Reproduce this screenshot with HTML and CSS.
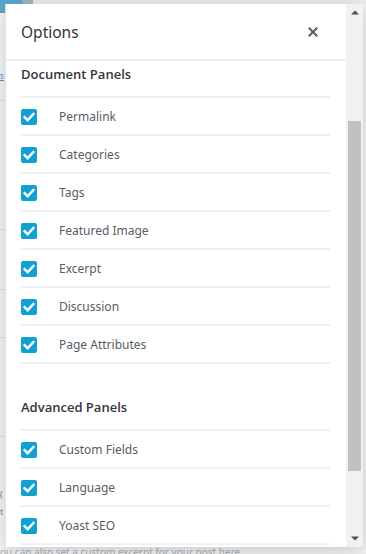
FILE: index.html
```html
<!DOCTYPE html>
<html lang="en">
<head>
<meta charset="utf-8">
<title>Options</title>
<link rel="stylesheet" href="styles.css">
</head>
<body>
<div class="page">
  <div class="topbar">
    <div class="blue-btn"><span class="btn-dark"></span></div>
  </div>
  <div class="side">
    <span class="link-frag">s</span>
    <span class="rule r1"></span>
    <span class="rule r2"></span>
    <span class="rule r3"></span>
    <span class="rule r4"></span>
    <span class="frag purple">(</span>
    <span class="frag teal">t</span>
    <span class="rule r5"></span>
  </div>
  <div class="bottom-text">ou can also set a custom excerpt for your post here.</div>
</div>

<div class="modal">
  <div class="modal-main">
    <div class="modal-header">
      <h1 class="modal-title">Options</h1>
      <button class="close-btn" aria-label="Close dialog">
        <svg viewBox="0 0 20 20" width="20" height="20"><path d="M14.95 6.46L11.41 10l3.54 3.54-1.41 1.41L10 11.42l-3.53 3.53-1.42-1.42L8.58 10 5.05 6.47l1.42-1.42L10 8.58l3.54-3.53z"/></svg>
      </button>
    </div>
    <div class="modal-content">
      <section class="section">
        <h2 class="section-title">Document Panels</h2>
        <ul class="options">
          <li class="option"><span class="cb"><svg viewBox="0 0 16 16"><path d="M3.6 8.2l3 3 5.8-6.2"/></svg></span><span class="label">Permalink</span></li>
          <li class="option"><span class="cb"><svg viewBox="0 0 16 16"><path d="M3.6 8.2l3 3 5.8-6.2"/></svg></span><span class="label">Categories</span></li>
          <li class="option"><span class="cb"><svg viewBox="0 0 16 16"><path d="M3.6 8.2l3 3 5.8-6.2"/></svg></span><span class="label">Tags</span></li>
          <li class="option"><span class="cb"><svg viewBox="0 0 16 16"><path d="M3.6 8.2l3 3 5.8-6.2"/></svg></span><span class="label">Featured Image</span></li>
          <li class="option"><span class="cb"><svg viewBox="0 0 16 16"><path d="M3.6 8.2l3 3 5.8-6.2"/></svg></span><span class="label">Excerpt</span></li>
          <li class="option"><span class="cb"><svg viewBox="0 0 16 16"><path d="M3.6 8.2l3 3 5.8-6.2"/></svg></span><span class="label">Discussion</span></li>
          <li class="option"><span class="cb"><svg viewBox="0 0 16 16"><path d="M3.6 8.2l3 3 5.8-6.2"/></svg></span><span class="label">Page Attributes</span></li>
        </ul>
      </section>
      <section class="section">
        <h2 class="section-title">Advanced Panels</h2>
        <ul class="options">
          <li class="option"><span class="cb"><svg viewBox="0 0 16 16"><path d="M3.6 8.2l3 3 5.8-6.2"/></svg></span><span class="label">Custom Fields</span></li>
          <li class="option"><span class="cb"><svg viewBox="0 0 16 16"><path d="M3.6 8.2l3 3 5.8-6.2"/></svg></span><span class="label">Language</span></li>
          <li class="option"><span class="cb"><svg viewBox="0 0 16 16"><path d="M3.6 8.2l3 3 5.8-6.2"/></svg></span><span class="label">Yoast SEO</span></li>
        </ul>
      </section>
    </div>
  </div>
  <div class="scrollbar">
    <div class="sb-btn"><svg viewBox="0 0 8 5" width="8" height="5"><polygon points="0,4.5 4,0.5 8,4.5"/></svg></div>
    <div class="sb-track"><div class="sb-thumb"></div></div>
    <div class="sb-btn"><svg viewBox="0 0 8 5" width="8" height="5"><polygon points="0,0.5 8,0.5 4,4.5"/></svg></div>
  </div>
</div>
</body>
</html>
```

FILE: styles.css
```css
* { box-sizing: border-box; }
html, body { margin: 0; padding: 0; }
body {
  width: 366px;
  height: 554px;
  overflow: hidden;
  position: relative;
  background: #f3f4f5;
  font-family: "Noto Sans", "Open Sans", sans-serif;
}

/* background page fragments */
.page { position: relative; height: 554px; }
.topbar { height: 4px; background: #eeeff0; }
.blue-btn {
  position: absolute; left: 0; top: 0;
  width: 33px; height: 13px;
  background: #5aa9cf;
}
.btn-dark {
  position: absolute; left: 22px; top: 0;
  width: 11px; height: 4px; background: #9fb6c2;
}
.side {
  position: absolute; left: 0; top: 13px; width: 5px; height: 534px;
  background: #f8f9f9;
}
.link-frag {
  position: absolute; left: 0; top: 58px;
  font-size: 8px; line-height: 10px; color: #4f94d4; text-decoration: underline;
}
.rule { position: absolute; left: 0; width: 5px; height: 1px; background: #e2e4e7; }
.r1 { top: 87px; }
.r2 { top: 216px; }
.r3 { top: 276px; }
.r4 { top: 324px; }
.r5 { top: 423px; }
.frag { position: absolute; left: 0; font-size: 9px; line-height: 11px; }
.purple { top: 476px; color: #8c6fa8; }
.teal { top: 493px; color: #5c9f9a; }
.bottom-text {
  position: absolute; left: 0; top: 546px;
  font-size: 10px; line-height: 12px; color: #a9acaf; white-space: nowrap;
}

/* modal */
.modal {
  position: absolute; left: 5px; top: 4px;
  width: 358px; height: 543px;
  display: flex;
  background: #fff;
  box-shadow: 0 3px 20px rgba(25, 30, 35, 0.22);
  border-left: 1px solid #e2e4e7;
}
.modal-main {
  flex: 1;
  min-width: 0;
  display: flex;
  flex-direction: column;
  overflow: hidden;
  background: #fff;
}
.modal-header {
  flex: none;
  height: 57px;
  border-bottom: 2px solid #eceeef;
  display: flex;
  align-items: center;
  justify-content: space-between;
  padding: 0 23px 0 15px;
}
.modal-title {
  margin: 0;
  font-size: 15.5px;
  font-weight: 400;
  color: #32373c;
  line-height: 20px;
}
.close-btn {
  border: 0; background: none; padding: 0; margin: 0;
  width: 20px; height: 20px;
  display: flex;
}
.close-btn svg { fill: #555d66; }

.modal-content { padding: 3px 16px 0 15px; }
.section + .section { margin-top: 33px; }
.section-title {
  margin: 0 0 12px;
  font-family: "Open Sans", "Noto Sans", sans-serif;
  font-size: 13px;
  font-weight: 600;
  line-height: 20px;
  color: #32373c;
}
.options {
  list-style: none;
  margin: 0; padding: 0;
  border-bottom: 2px solid #eff0f1;
}
.option {
  height: 38px;
  border-top: 2px solid #eff0f1;
  display: flex;
  align-items: center;
  padding-top: 1px;
}
.cb {
  width: 16px; height: 16px;
  border-radius: 2px;
  background: #11a0d2;
  display: flex;
  flex: none;
}
.cb svg {
  width: 16px; height: 16px;
  fill: none; stroke: #fff; stroke-width: 2.4;
  stroke-linecap: square;
}
.label {
  margin-left: 22px;
  font-size: 12px;
  color: #555d66;
  line-height: 16px;
  padding-top: 1px;
}

/* custom scrollbar */
.scrollbar {
  flex: none;
  width: 17px;
  background: #f1f1f1;
  display: flex;
  flex-direction: column;
}
.sb-btn {
  height: 17px;
  display: flex;
  align-items: center;
  justify-content: center;
}
.sb-btn svg { fill: #505050; }
.sb-track { flex: 1; padding: 100px 2px 0; }
.sb-thumb { height: 350px; background: #c1c1c1; }
```
